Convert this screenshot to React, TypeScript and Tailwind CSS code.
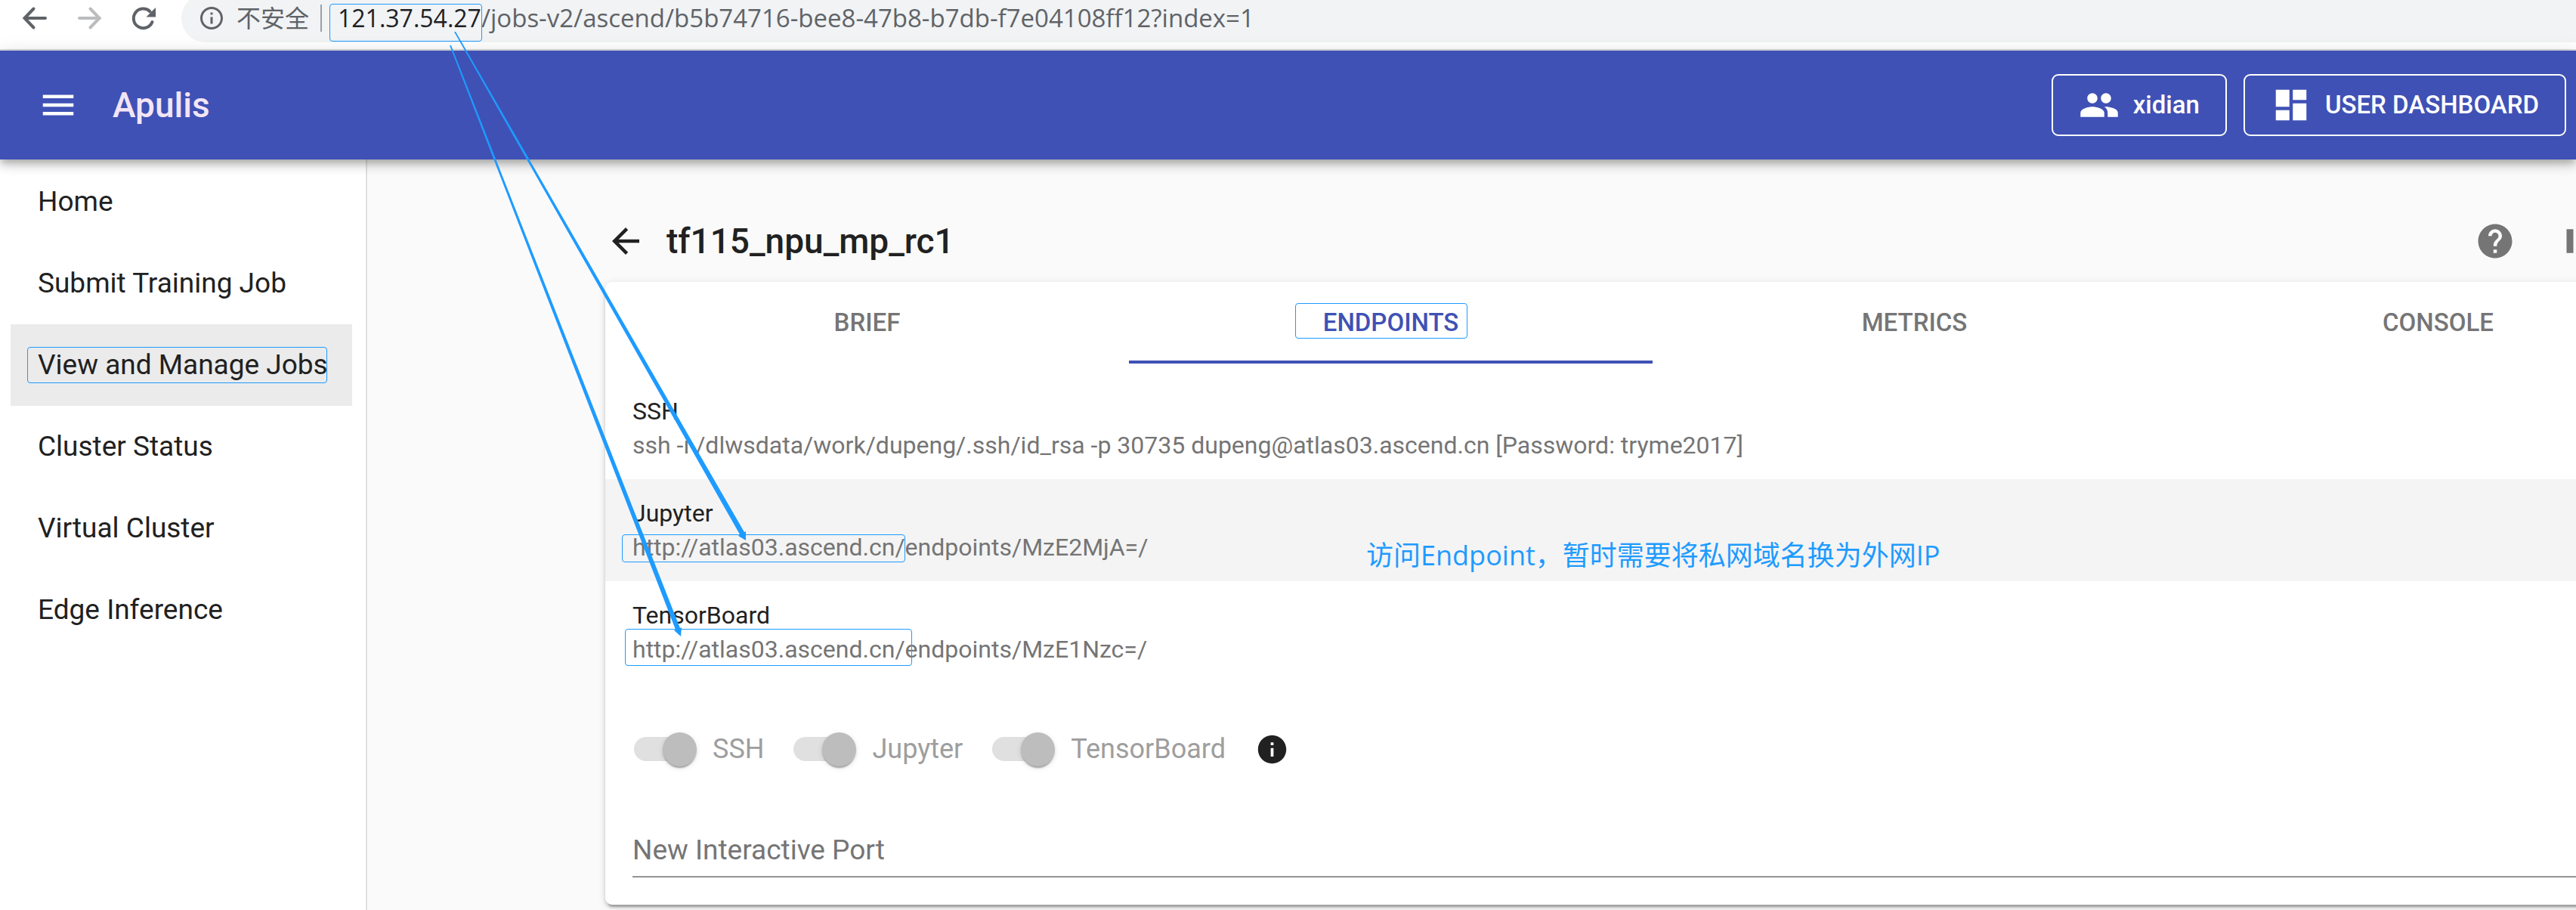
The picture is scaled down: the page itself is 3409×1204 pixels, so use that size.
import React from "react";
import {
  MdArrowBack,
  MdDashboard,
  MdHelp,
  MdInfo,
  MdInfoOutline,
  MdMenu,
  MdPause,
  MdPeople,
} from "react-icons/md";

const navItems = [
  "Home",
  "Submit Training Job",
  "View and Manage Jobs",
  "Cluster Status",
  "Virtual Cluster",
  "Edge Inference",
];

const tabs = ["BRIEF", "ENDPOINTS", "METRICS", "CONSOLE"];

const endpoints = [
  {
    name: "SSH",
    value:
      "ssh -i /dlwsdata/work/dupeng/.ssh/id_rsa -p 30735 dupeng@atlas03.ascend.cn [Password: tryme2017]",
  },
  { name: "Jupyter", value: "http://atlas03.ascend.cn/endpoints/MzE2MjA=/", link: true },
  { name: "TensorBoard", value: "http://atlas03.ascend.cn/endpoints/MzE1Nzc=/", link: true },
];

function BrowserBar() {
  return (
    <div className="flex h-[67px] items-start overflow-hidden border-b-2 border-[#dadcde] bg-white pl-[24px] font-['Open_Sans','Noto_Sans_CJK_SC',sans-serif] text-[32px]">
      <div className="flex h-[47px] items-center gap-[28px] text-[#5f6368]">
        <button aria-label="Back">
          <svg className="size-[44px]" viewBox="0 0 44 44" fill="none" stroke="currentColor" strokeWidth="4" aria-hidden="true">
            <path d="M36 22 H9 M20.5 9.5 L8.5 22 L20.5 34.5" strokeLinecap="round" strokeLinejoin="miter" />
          </svg>
        </button>
        <button aria-label="Forward" className="text-[#babcbe]">
          <svg className="size-[44px]" viewBox="0 0 44 44" fill="none" stroke="currentColor" strokeWidth="4" aria-hidden="true">
            <path d="M9 22 H36 M23.5 9.5 L35.5 22 L23.5 34.5" strokeLinecap="round" strokeLinejoin="miter" />
          </svg>
        </button>
        <button aria-label="Reload">
          <svg className="size-[44px]" viewBox="0 0 44 44" fill="none" aria-hidden="true">
            <path
              d="M33.5 27 A12.8 12.8 0 1 1 30.5 13.2"
              stroke="currentColor"
              strokeWidth="4"
              strokeLinecap="round"
            />
            <path d="M38 8 V20.5 H25.5 Z" fill="currentColor" />
          </svg>
        </button>
      </div>
      <div className="-mt-[8px] ml-[28px] flex h-[64px] flex-1 items-center rounded-l-full bg-[#f1f3f4] pl-[22px] text-[#5f6368]">
        <MdInfoOutline className="size-[36px]" />
        <span className="ml-[15px]">不安全</span>
        <span className="mr-[21px] ml-[15px] h-[36px] w-[2px] bg-[#9aa0a6]" />
        <span className="whitespace-nowrap">
          <span className="text-[#202124]">121.37.54.27</span>
          <span className="text-[33px]">/jobs-v2/ascend/b5b74716-bee8-47b8-b7db-f7e04108ff12?index=1</span>
        </span>
      </div>
    </div>
  );
}

function AppHeader() {
  return (
    <header className="relative z-10 flex h-[144px] items-center bg-[#3f51b5] pr-[13px] pl-[50px] text-white shadow-[0_4px_9px_-2px_rgba(0,0,0,0.2),0_9px_11px_0_rgba(0,0,0,0.14),0_2px_22px_0_rgba(0,0,0,0.12)]">
      <button aria-label="Menu">
        <MdMenu className="size-[54px]" />
      </button>
      <h1 className="ml-[45px] flex-1 text-[46px] font-medium text-[#f3e5f5]">Apulis</h1>
      <div className="flex gap-[22px] text-[33px] font-medium">
        <button className="flex h-[82px] items-center gap-[18px] rounded-[9px] border-2 border-white px-[34px]">
          <MdPeople className="size-[54px]" />
          xidian
        </button>
        <button className="flex h-[82px] items-center gap-[18px] rounded-[9px] border-2 border-white px-[34px]">
          <MdDashboard className="size-[54px]" />
          USER DASHBOARD
        </button>
      </div>
    </header>
  );
}

function Sidebar() {
  return (
    <nav className="w-[486px] shrink-0 border-r-2 border-[#e0e0e0] bg-white pt-[2px] pr-[18px] pl-[14px] text-[37px]">
      {navItems.map((item) => (
        <a
          key={item}
          href="#"
          className={
            item === "View and Manage Jobs"
              ? "flex h-[108px] items-center bg-[#ebebeb] pl-[36px] whitespace-nowrap"
              : "flex h-[108px] items-center pl-[36px] whitespace-nowrap"
          }
        >
          {item}
        </a>
      ))}
    </nav>
  );
}

function Toggle({ label }: { label: string }) {
  return (
    <label className="flex items-center gap-[21px] text-[#9e9e9e]">
      <span className="relative flex h-[45px] w-[83px] items-center">
        <input type="checkbox" role="switch" checked disabled readOnly className="peer sr-only" />
        <span className="h-[32px] w-[76px] rounded-full bg-[#e0e0e0]" />
        <span className="absolute right-0 size-[45px] rounded-full bg-[#bdbdbd] shadow-[0_4px_2px_-2px_rgba(0,0,0,0.2),0_2px_2px_0_rgba(0,0,0,0.14),0_2px_7px_0_rgba(0,0,0,0.12)]" />
      </span>
      {label}
    </label>
  );
}

function JobCard() {
  return (
    <section className="rounded-[9px] bg-white pb-[36px] shadow-[0_7px_2px_-4px_rgba(0,0,0,0.2),0_4px_4px_0_rgba(0,0,0,0.14),0_2px_11px_0_rgba(0,0,0,0.12)]">
      <div role="tablist" className="grid grid-cols-4 text-[33px] font-medium">
        {tabs.map((tab) => (
          <button
            key={tab}
            role="tab"
            aria-selected={tab === "ENDPOINTS"}
            className={
              tab === "ENDPOINTS"
                ? "h-[108px] border-y-4 border-t-transparent border-b-[#3f51b5] text-[#3f51b5]"
                : "h-[108px] text-[#757575]"
            }
          >
            {tab}
          </button>
        ))}
      </div>
      <ul className="py-[18px] text-[32px] leading-[45px]">
        {endpoints.map((e) => (
          <li
            key={e.name}
            className={
              e.name === "Jupyter"
                ? "flex h-[135px] flex-col items-start justify-center bg-[#f4f4f4] px-[36px]"
                : "flex h-[135px] flex-col items-start justify-center px-[36px]"
            }
          >
            <span>{e.name}</span>
            {e.link ? (
              <a href="#" className="text-[#757575]">
                {e.value}
              </a>
            ) : (
              <span className="text-[#757575]">{e.value}</span>
            )}
          </li>
        ))}
      </ul>
      <div className="mt-[26px] flex h-[86px] items-center gap-[39px] px-[38px]">
        <Toggle label="SSH" />
        <Toggle label="Jupyter" />
        <Toggle label="TensorBoard" />
        <MdInfo className="size-[45px]" />
      </div>
      <div className="mt-[54px] px-[36px]">
        <input
          type="text"
          aria-label="New Interactive Port"
          placeholder="New Interactive Port"
          className="block h-[73px] w-full border-b-2 border-[#949494] bg-transparent pt-[2px] text-[37px] outline-none placeholder:text-[#757575]"
        />
      </div>
    </section>
  );
}

function Annotations() {
  return (
    <div className="pointer-events-none absolute inset-0 z-20">
      <span className="absolute top-[5px] left-[436px] h-[50px] w-[202px] rounded-[4px] border border-[#1e9bff]" />
      <span className="absolute top-[459px] left-[36px] h-[48px] w-[397px] rounded-[4px] border border-[#1e9bff]" />
      <span className="absolute top-[401px] left-[1714px] h-[47px] w-[228px] rounded-[4px] border border-[#1e9bff]" />
      <span className="absolute top-[707px] left-[823px] h-[37px] w-[375px] rounded-[4px] border border-[#1e9bff]" />
      <span className="absolute top-[832px] left-[827px] h-[49px] w-[380px] rounded-[4px] border border-[#1e9bff]" />
      <svg className="absolute top-0 left-0 h-[900px] w-[1100px]" viewBox="0 0 1100 900" fill="#1e9bff" aria-hidden="true">
        <path d="M601 42 L603 42 L985 704 L987 703 L987 715 L977 709 L979 707 Z" />
        <path d="M595 60 L597 60 L900 831 L902 830 L901 842 L892 834 L894 833 Z" />
      </svg>
      <p className="absolute top-[708px] left-[1808px] font-['Open_Sans','Noto_Sans_CJK_SC',sans-serif] text-[36px] leading-[54px] whitespace-nowrap text-[#1e9bff]">
        访问Endpoint，暂时需要将私网域名换为外网IP
      </p>
    </div>
  );
}

export default function App() {
  return (
    <div className="relative flex min-h-screen flex-col overflow-hidden bg-[#fafafa] font-['Roboto',sans-serif] text-[36px] leading-[54px] text-[#212121]">
      <BrowserBar />
      <AppHeader />
      <div className="flex flex-1">
        <Sidebar />
        <main className="-mr-[164px] min-w-0 flex-1 pt-[54px] pl-[315px]">
          <div className="flex h-[108px] items-center pr-[136px]">
            <button aria-label="Back to jobs">
              <MdArrowBack className="size-[54px]" />
            </button>
            <h2 className="ml-[27px] flex-1 text-[46px] font-medium">tf115_npu_mp_rc1</h2>
            <div className="flex gap-[54px] text-[#757575]">
              <button aria-label="Help">
                <MdHelp className="size-[54px]" />
              </button>
              <button aria-label="Pause">
                <MdPause className="size-[54px]" />
              </button>
            </div>
          </div>
          <JobCard />
        </main>
      </div>
      <Annotations />
    </div>
  );
}
